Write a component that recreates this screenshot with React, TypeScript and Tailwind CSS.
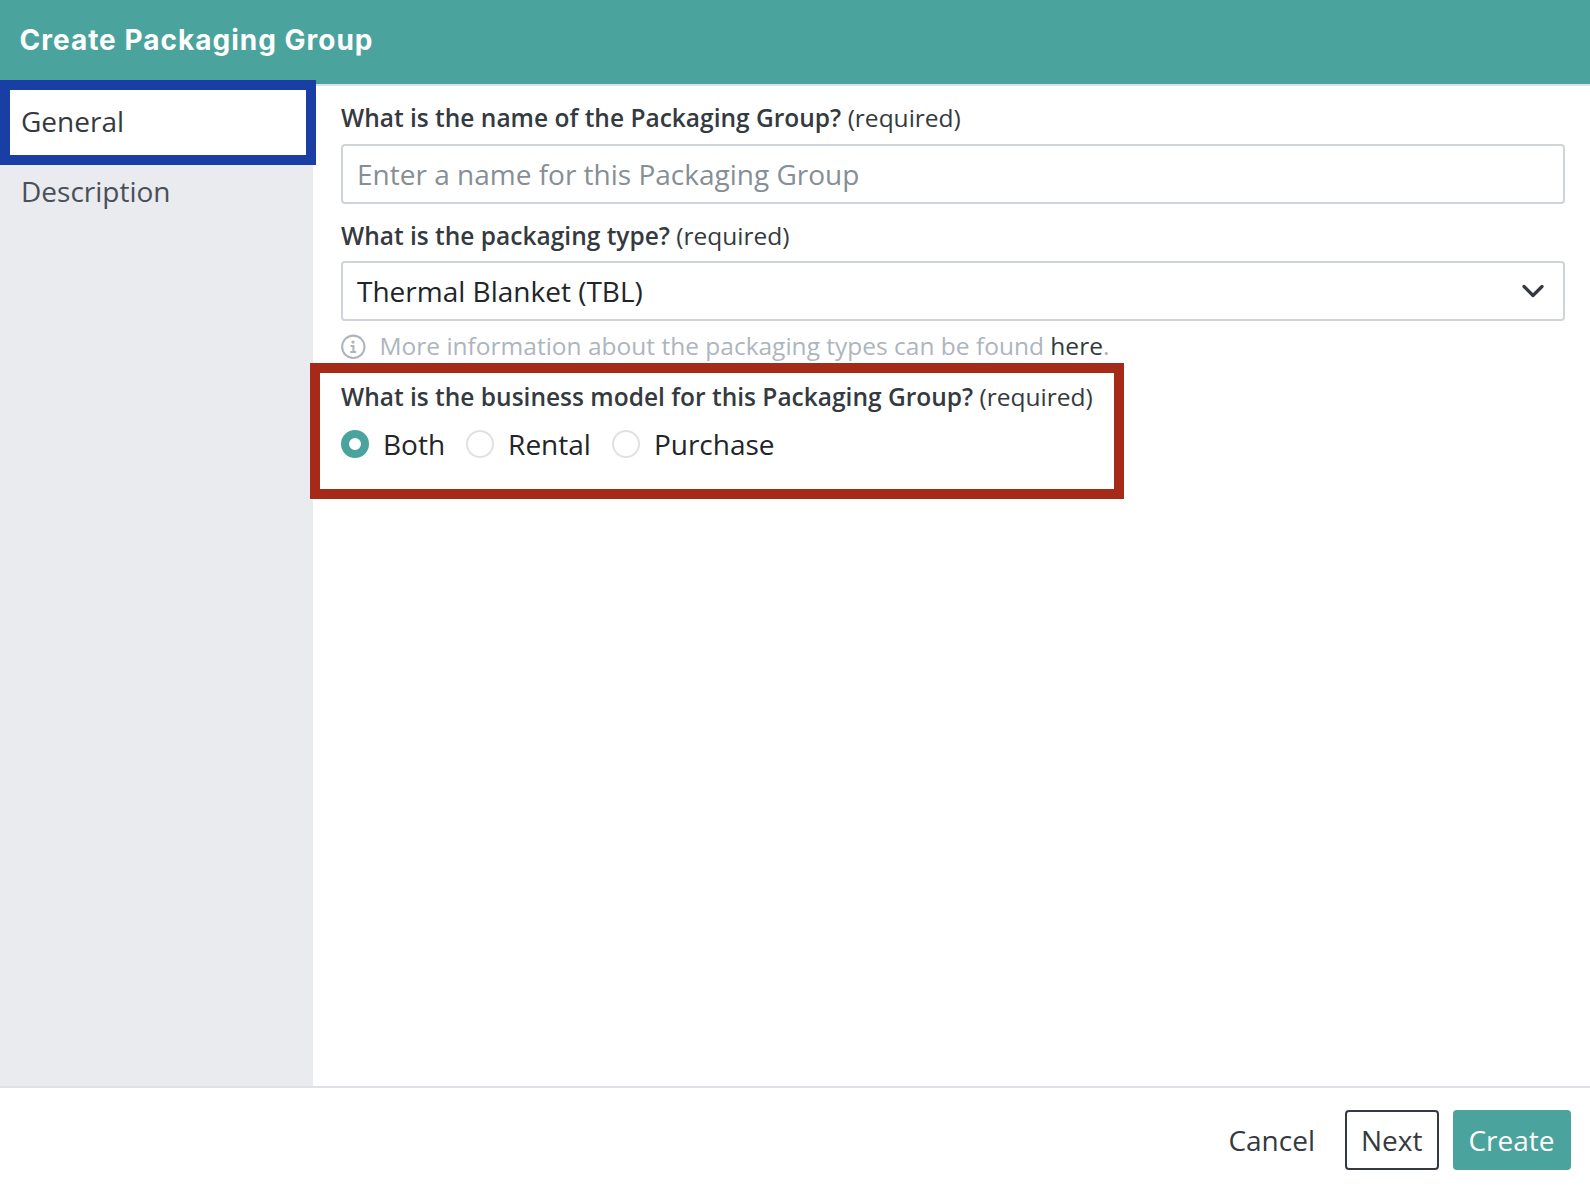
import { useState } from "react";

const steps = ["General", "Description"];
const businessModels = ["Both", "Rental", "Purchase"];

function FieldLabel({ text }: { text: string }) {
  return (
    <div className="h-[37px] text-[24.5px] leading-[35px] whitespace-nowrap text-[#343a40]">
      <span className="font-semibold">{text}</span> (required)
    </div>
  );
}

function InfoIcon() {
  return (
    <svg width="25" height="25" viewBox="0 0 25 25" fill="none">
      <circle cx="12.3" cy="12.8" r="11.2" stroke="#adb5bd" strokeWidth="2.1" />
      <circle cx="12" cy="8.1" r="1.7" fill="#adb5bd" />
      <path d="M9.6 12h2.8v6M9.2 18h6" stroke="#adb5bd" strokeWidth="2.1" />
    </svg>
  );
}

export default function App() {
  const [step, setStep] = useState("General");
  const [model, setModel] = useState("Both");

  return (
    <div className="relative flex h-[1188px] w-[1590px] flex-col overflow-hidden bg-white font-['Open_Sans',sans-serif] text-[28px] leading-[42px] text-[#212529]">
      <header className="h-[86px] border-b-2 border-[#dfe1e7] bg-[#4aa39c] px-[19.5px] pt-[19px]">
        <h1 className="font-['Inter',sans-serif] text-[28px] leading-[42px] font-bold tracking-[1px] whitespace-nowrap text-white">
          Create Packaging Group
        </h1>
      </header>

      <div className="flex flex-1">
        <nav className="w-[313px] bg-[#eaebef]">
          {steps.map((s) => (
            <button
              key={s}
              onClick={() => setStep(s)}
              className={`block h-[70px] w-full px-[21px] text-left ${
                s === step ? "bg-white text-[#343a40]" : "text-[#495057]"
              }`}
            >
              {s}
            </button>
          ))}
        </nav>

        <main className="flex-1 pt-[14px] pr-[25px] pl-7">
          <FieldLabel text="What is the name of the Packaging Group?" />
          <input
            placeholder="Enter a name for this Packaging Group"
            className="mt-[7px] block h-[60px] w-full rounded-[4px] border-2 border-[#ced4da] px-[14px] placeholder:text-[#868e96]"
          />

          <div className="mt-[14px]">
            <FieldLabel text="What is the packaging type?" />
          </div>
          <div className="mt-[6px] flex h-[60px] items-center justify-between rounded-[4px] border-2 border-[#ced4da] pr-[18px] pl-[14px]">
            <span>Thermal Blanket (TBL)</span>
            <svg width="24" height="24" viewBox="0 0 24 24" fill="none">
              <path
                d="M3 7.5l9 9 9-9"
                stroke="#343a40"
                strokeWidth="3.2"
                strokeLinecap="round"
                strokeLinejoin="round"
              />
            </svg>
          </div>

          <div className="mt-[7px] flex h-[37px] text-[24.5px] leading-[35px] whitespace-nowrap text-[#adb5bd]">
            <span className="pt-[6px]">
              <InfoIcon />
            </span>
            <span className="ml-[13.5px]">
              More information about the packaging types can be found{" "}
              <a className="text-[#343a40]">here</a>.
            </span>
          </div>

          <div className="mt-[14px]">
            <FieldLabel text="What is the business model for this Packaging Group?" />
          </div>
          <div className="mt-[7px] flex gap-[21px]">
            {businessModels.map((m) => (
              <label key={m} className="flex h-[42px] items-center gap-[14px]">
                <input
                  type="radio"
                  name="model"
                  checked={m === model}
                  onChange={() => setModel(m)}
                  className="size-7 appearance-none rounded-full border-2 border-[#dfe1e7] bg-white checked:border-8 checked:border-[#4aa39c]"
                />
                <span>{m}</span>
              </label>
            ))}
          </div>
        </main>
      </div>

      <footer className="flex h-[102px] items-start justify-end gap-[14px] border-t-2 border-[#dee2e6] pt-[22px] pr-[19px]">
        <button className="h-[60px] rounded-[4px] pr-[16.5px] pl-[15.5px] text-[#343a40]">Cancel</button>
        <button className="h-[60px] rounded-[4px] border-2 border-[#343a40] pr-[14.5px] pl-[13.5px] text-[#343a40]">
          Next
        </button>
        <button className="h-[60px] rounded-[4px] bg-[#4aa39c] pr-[16.5px] pl-[15.5px] text-white">
          Create
        </button>
      </footer>

      {/* highlight frames */}
      <div className="pointer-events-none absolute top-[80px] left-0 h-[85px] w-[316px] border-10 border-[#1a3fa4]" />
      <div className="pointer-events-none absolute top-[363px] left-[310px] h-[136px] w-[814px] border-10 border-[#a52a17]" />
    </div>
  );
}
